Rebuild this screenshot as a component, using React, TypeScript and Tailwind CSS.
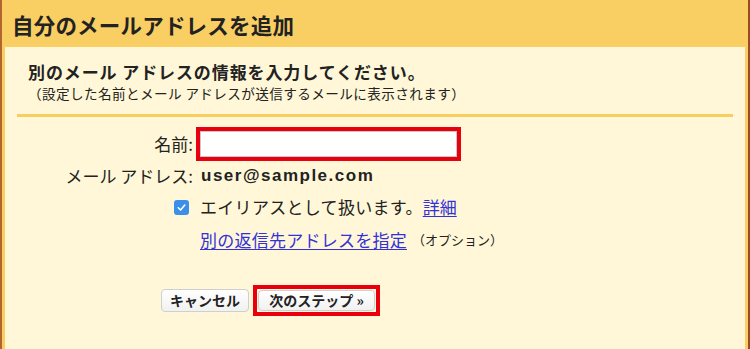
import React from 'react';

const jp = { fontFamily: '"Noto Sans CJK JP", "Noto Sans", sans-serif' };

const Check: React.FC = () => (
  <span className="flex h-[15px] w-[15px] items-center justify-center rounded-[3px] bg-[#3b8fe8]">
    <svg width="11" height="11" viewBox="0 0 12 12" fill="none">
      <path d="M2.5 6.3 L5 8.8 L9.6 3.4" stroke="#fff" strokeWidth="1.7" strokeLinecap="round" strokeLinejoin="round" />
    </svg>
  </span>
);

const App: React.FC = () => {
  return (
    <div
      style={jp}
      className="flex h-[349px] w-[750px] flex-col overflow-hidden border-l-2 border-r-2 border-l-[#b3652f] border-r-[#9a4a22] bg-[#f9cf64] text-[#222]"
    >
      {/* header */}
      <div className="flex h-[47px] shrink-0 items-center pl-[10px] pt-[2px]">
        <h1 className="text-[21.5px] font-bold leading-none tracking-[0.2px]">自分のメールアドレスを追加</h1>
      </div>

      {/* panel */}
      <div className="ml-[3px] mr-[3px] flex-1 bg-[#fff7d7]">
        <div className="pl-[23px] pt-[13px]">
          <div className="text-[17px] font-bold leading-[24px] tracking-[0.9px]">別のメール アドレスの情報を入力してください。</div>
          <div className="text-[13.6px] leading-[18px] tracking-[0.4px]">（設定した名前とメール アドレスが送信するメールに表示されます）</div>
        </div>

        <div className="mx-[12px] mt-[12px] h-[3px] bg-[#f8cf5f]" />

        {/* form */}
        <div className="mt-[10px] grid grid-cols-[191px_1fr] text-[17px]">
          <div className="flex h-[34px] items-center justify-end pr-[3px]">名前:</div>
          <div className="flex h-[34px] items-center">
            <div className="h-[34px] w-[265px] border-4 border-[#e8000e] bg-white">
              <input className="h-full w-full border border-[#c8c8c8] bg-white outline-none" />
            </div>
          </div>

          <div className="flex h-[30px] items-center justify-end pr-[3px]">メール アドレス:</div>
          <div
            className="flex h-[30px] items-center pl-[5px] text-[17px] font-bold tracking-[1.5px]"
            style={{ fontFamily: '"Liberation Sans", Arial, sans-serif' }}
          >
            user@sample.com
          </div>

          <div className="flex h-[32px] items-center justify-end pr-[7px]">
            <Check />
          </div>
          <div className="flex h-[32px] items-center pl-[4px]">
            <span className="tracking-[0.3px]">エイリアスとして扱います。</span>
            <a href="#" className="ml-0 text-[#3232d8] underline underline-offset-2">詳細</a>
          </div>

          <div className="h-[34px]" />
          <div className="flex h-[34px] items-center pl-[4px]">
            <a href="#" className="tracking-[0.25px] text-[#3232d8] underline underline-offset-2">別の返信先アドレスを指定</a>
            <span className="ml-[5px] text-[13px]">（オプション）</span>
          </div>
        </div>

        {/* buttons */}
        <div className="mt-[28px] flex items-center gap-[4px] pl-[156px]">
          <button className="flex h-[23px] w-[88px] items-center justify-center rounded-[4px] border border-[#cfcfcf] bg-gradient-to-b from-white to-[#f1f1f1] text-[14px] font-bold text-[#222]">
            キャンセル
          </button>
          <div className="h-[31px] w-[127px] border-4 border-[#e8000e] p-[1px]">
            <button className="flex h-full w-full items-center justify-center rounded-[4px] border border-[#cfcfcf] bg-gradient-to-b from-white to-[#f1f1f1] text-[14px] font-bold text-[#222]">
              次のステップ »
            </button>
          </div>
        </div>
      </div>
    </div>
  );
};

export default App;
